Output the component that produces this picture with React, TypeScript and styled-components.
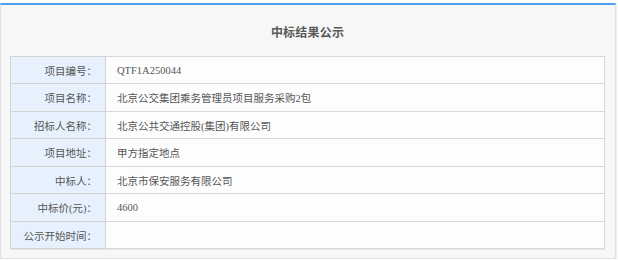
import React from 'react';
import styled, { createGlobalStyle } from 'styled-components';

const GlobalStyle = createGlobalStyle`
  html, body {
    background: #ffffff;
    margin: 0;
    padding: 0;
  }

  body {
    font-family: "Liberation Serif", "Noto Sans CJK SC", serif;
  }
`;

const Page = styled.div`
  padding-top: 3px;
  width: 618px;
`;

const Panel = styled.section`
  background-color: #f7f7f7;
  border: 1px solid #e2e2e2;
  border-top: 2px solid #4aa0f0;
  box-shadow: 1px 1px 0 #eeeeee;
  box-sizing: border-box;
  height: 256px;
  padding: 0 10px 0 9px;
  width: 616px;
`;

const Title = styled.h2`
  align-items: center;
  box-sizing: border-box;
  color: #595959;
  display: flex;
  font-size: 12px;
  font-weight: bold;
  height: 51px;
  justify-content: center;
  letter-spacing: 0.2px;
  margin: 0;
  padding-top: 2px;
`;

const Table = styled.table`
  border: 1px solid #d4d4d4;
  border-collapse: collapse;
  box-shadow: 0 1px 0 #e6e6e6;
  table-layout: fixed;
  width: 595px;
`;

const Row = styled.tr<{ $height: number }>`
  height: ${(p) => p.$height}px;
`;

const Label = styled.th`
  background-color: #e6f1fd;
  border: 1px solid #d4d4d4;
  box-sizing: border-box;
  color: #555555;
  font-size: 10.5px;
  font-weight: normal;
  padding: 0 8px 0 0;
  text-align: right;
  width: 95px;
`;

const Value = styled.td`
  background-color: #fdfdfd;
  border: 1px solid #d8d8d8;
  color: #555555;
  font-size: 10.5px;
  padding: 0 0 0 11px;
  text-align: left;
`;

const rows: [string, string][] = [
  ['项目编号：', 'QTF1A250044'],
  ['项目名称：', '北京公交集团乘务管理员项目服务采购2包'],
  ['招标人名称：', '北京公共交通控股(集团)有限公司'],
  ['项目地址：', '甲方指定地点'],
  ['中标人：', '北京市保安服务有限公司'],
  ['中标价(元)：', '4600'],
  ['公示开始时间：', ''],
];

const App: React.FC = () => (
  <Page>
    <GlobalStyle />
    <Panel>
      <Title>中标结果公示</Title>
      <Table>
        <tbody>
          {rows.map(([label, value], i) => (
            <Row key={label} $height={i % 2 === 0 ? 27 : 28}>
              <Label>{label}</Label>
              <Value>{value}</Value>
            </Row>
          ))}
        </tbody>
      </Table>
    </Panel>
  </Page>
);

export default App;
